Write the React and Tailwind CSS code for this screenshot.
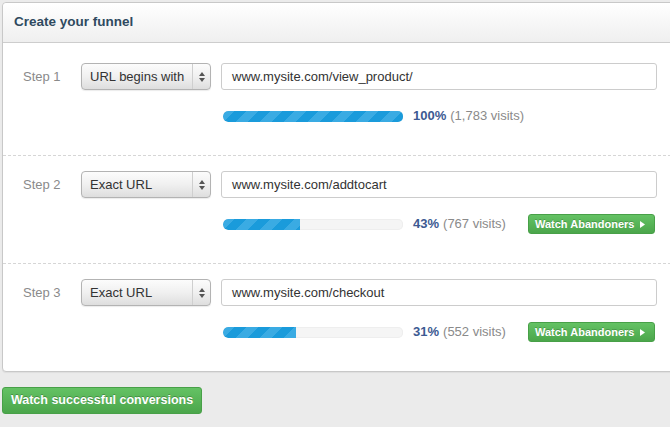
import React from "react";

const stripe = {
  backgroundColor: "#1a9bdb",
};

function Select({ label }) {
  return (
    <div className="relative flex h-[27px] w-[130px] items-center rounded-[4px] border border-[#b3b3b3] bg-gradient-to-b from-[#fcfcfc] via-[#f0f0f0] to-[#dedede] shadow-[0_1px_1px_rgba(0,0,0,0.08)]">
      <span className="flex-1 pl-[8px] text-[13px] text-[#333]">{label}</span>
      <div className="flex h-full w-[18px] flex-col items-center justify-center gap-[2px] border-l border-[#cfcfcf]">
        <svg width="6" height="4" viewBox="0 0 6 4"><path d="M3 0 L6 4 L0 4 Z" fill="#555" /></svg>
        <svg width="6" height="4" viewBox="0 0 6 4"><path d="M0 0 L6 0 L3 4 Z" fill="#555" /></svg>
      </div>
    </div>
  );
}

function Bar({ fill }) {
  return (
    <div className="h-[11px] w-[180px] overflow-hidden rounded-[5px] bg-[#f5f5f5] shadow-[inset_0_0_0_1px_#eeeeee]">
      <div
        className="h-full rounded-l-[5px] bg-[linear-gradient(135deg,#3aabe3_25%,transparent_25%,transparent_50%,#3aabe3_50%,#3aabe3_75%,transparent_75%,transparent)] bg-[length:24px_24px]"
        style={{ ...stripe, width: fill }}
      />
    </div>
  );
}

function Step({ n, type, url, fill, pct, visits, watch, first }) {
  return (
    <div className={`${first ? "pt-[20px]" : "pt-[15px] border-t border-dashed border-[#d6d6d6]"} pb-[29px]`}>
      <div className="flex items-center pl-[20px]">
        <span className="w-[58px] text-[13px] text-[#8a8a8a]">Step {n}</span>
        <Select label={type} />
        <div className="ml-[10px] flex h-[27px] w-[436px] items-center rounded-[3px] border border-[#cccccc] bg-white pl-[10px] text-[13px] text-[#333]">
          {url}
        </div>
      </div>
      <div className="ml-[218px] mt-[16px] flex h-[20px] w-[436px] items-center px-[2px]">
        <Bar fill={fill} />
        <span className="ml-[10px] text-[13px] font-bold text-[#3c5a92]">{pct}</span>
        <span className="ml-[4px] text-[13px] text-[#8a8a8a]">({visits} visits)</span>
        {watch && (
          <button className="ml-auto flex h-[20px] w-[127px] items-center rounded-[3px] border border-[#48a048] bg-gradient-to-b from-[#64c264] to-[#4ba64b] pl-[6px] pr-[9px] text-[11px] font-bold text-white [text-shadow:0_-1px_0_rgba(0,0,0,0.2)]">
            <span className="flex-1 text-left">Watch Abandoners</span>
            <svg width="5" height="7" viewBox="0 0 5 7"><path d="M0 0 L5 3.5 L0 7 Z" fill="#fff" /></svg>
          </button>
        )}
      </div>
    </div>
  );
}

export default function App() {
  return (
    <div className="h-[427px] w-[670px] overflow-hidden bg-[#ebebeb] pl-[2px] pt-[2px] font-['Liberation_Sans',Arial,sans-serif]">
      <div className="w-[700px] rounded-[4px] border border-[#c8c8c8] bg-white shadow-[0_1px_1px_rgba(0,0,0,0.06)]">
        <div className="flex h-[40px] items-center rounded-t-[4px] border-b border-[#cdcdcd] bg-gradient-to-b from-[#ffffff] to-[#efefef] pl-[11px] text-[13.5px] font-bold text-[#2f4a5f]">
          Create your funnel
        </div>
        <Step first n={1} type="URL begins with" url="www.mysite.com/view_product/" fill="180px" pct="100%" visits="1,783" />
        <Step n={2} type="Exact URL" url="www.mysite.com/addtocart" fill="77px" pct="43%" visits="767" watch />
        <Step n={3} type="Exact URL" url="www.mysite.com/checkout" fill="73px" pct="31%" visits="552" watch />
      </div>
      <button className="mt-[15px] flex h-[27px] w-[200px] items-center justify-center rounded-[3px] border border-[#48a048] bg-gradient-to-b from-[#64c264] to-[#4ba64b] text-[12.5px] font-bold text-white [text-shadow:0_-1px_0_rgba(0,0,0,0.25)]">
        Watch successful conversions
      </button>
    </div>
  );
}
